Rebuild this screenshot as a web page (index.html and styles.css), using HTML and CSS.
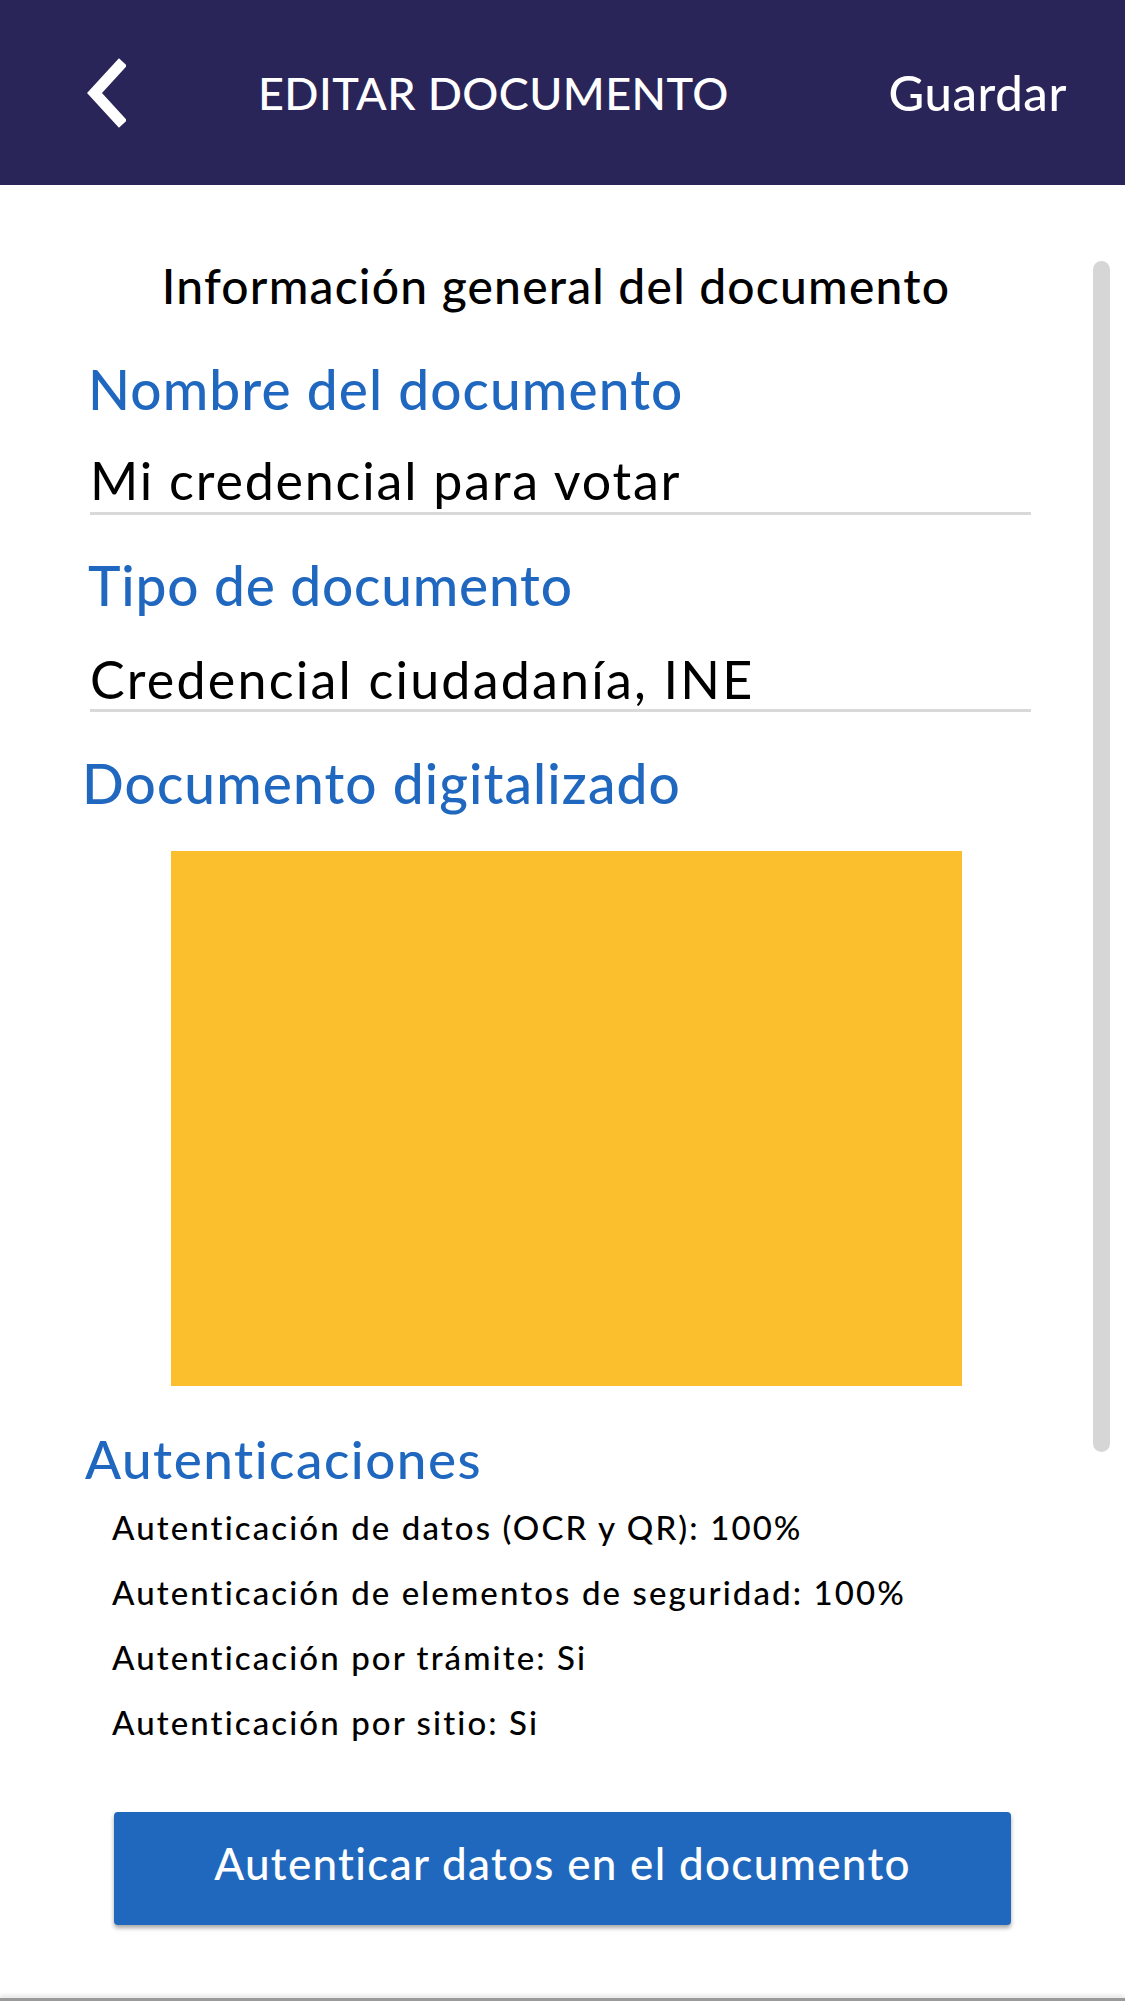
FILE: index.html
```html
<!DOCTYPE html>
<html lang="es">
<head>
<meta charset="utf-8">
<title>Editar documento</title>
<link rel="stylesheet" href="styles.css">
</head>
<body>
<div class="screen">
  <header class="topbar">
    <svg class="back" viewBox="0 0 40 70" width="40" height="70" aria-hidden="true">
      <polyline points="37,4 8.5,35 37,66" fill="none" stroke="#ffffff" stroke-width="11" stroke-linejoin="miter" stroke-miterlimit="10"/>
    </svg>
    <h1 class="topbar-title">EDITAR DOCUMENTO</h1>
    <span class="topbar-action">Guardar</span>
  </header>

  <main class="content">
    <div class="scrollbar"></div>
    <h2 class="section-title">Información general del documento</h2>

    <div class="fields">
      <div class="field-label">Nombre del documento</div>
      <div class="field-value">Mi credencial para votar</div>

      <div class="field-label field-label--gap">Tipo de documento</div>
      <div class="field-value field-value--second">Credencial ciudadanía, INE</div>

      <div class="field-label field-label--doc">Documento digitalizado</div>
    </div>

    <div class="doc-image"></div>

    <div class="field-label field-label--auth">Autenticaciones</div>
    <ul class="auth-list">
      <li>Autenticación de datos (OCR y QR): 100%</li>
      <li>Autenticación de elementos de seguridad: 100%</li>
      <li>Autenticación por trámite: Si</li>
      <li>Autenticación por sitio: Si</li>
    </ul>

    <button class="primary-btn" type="button">Autenticar datos en el documento</button>
  </main>

  <div class="bottom-edge"></div>
</div>
</body>
</html>
```

FILE: styles.css
```css
* {
  box-sizing: border-box;
}

html, body {
  margin: 0;
  padding: 0;
  background: #ffffff;
}

body {
  font-family: "Lato", "Open Sans", sans-serif;
  color: #000000;
}

.screen {
  width: 1125px;
  height: 2001px;
  display: flex;
  flex-direction: column;
  overflow: hidden;
}

/* ---------- top bar ---------- */
.topbar {
  height: 185px;
  flex: 0 0 185px;
  background: #2a2559;
  display: flex;
  align-items: center;
  padding-left: 86px;
  padding-right: 58px;
  color: #ffffff;
}

.back {
  display: block;
  flex: 0 0 40px;
  margin-top: 1px;
}

.topbar-title {
  margin: 0 0 0 132px;
  font-size: 45px;
  font-weight: 500;
  line-height: 1.2;
  letter-spacing: 0.4px;
}

.topbar-action {
  margin-left: auto;
  font-size: 49px;
  font-weight: 500;
  line-height: 1.2;
  letter-spacing: 0.6px;
}

/* ---------- content ---------- */
.content {
  position: relative;
  flex: 1 1 auto;
  padding-top: 72px;
}

.scrollbar {
  position: absolute;
  left: 1093px;
  top: 76px;
  width: 17px;
  height: 1191px;
  border-radius: 9px;
  background: #d6d6d6;
}

.section-title {
  width: 1112px;
  margin: 0;
  text-align: center;
  font-size: 48px;
  font-weight: 500;
  line-height: 1.2;
  letter-spacing: 1.2px;
}

.fields {
  margin-left: 88px;
  width: 943px;
}

.field-label {
  color: #1f67bf;
  font-size: 55px;
  font-weight: 500;
  line-height: 1.2;
  letter-spacing: 1.1px;
  margin-top: 41px;
}

.field-label--gap {
  margin-top: 37px;
  letter-spacing: 0.8px;
}

.field-label--doc {
  margin-top: 38px;
  margin-left: -6px;
}

.field-label--auth {
  font-size: 53px;
  letter-spacing: 1.5px;
  margin-top: 41px;
  margin-left: 85px;
}

.field-value {
  margin-top: 27px;
  margin-left: 2px;
  font-size: 52px;
  font-weight: 400;
  line-height: 1.2;
  letter-spacing: 1.8px;
  border-bottom: 3px solid #d9d9d9;
  padding-bottom: 1px;
}

.field-value--second {
  margin-top: 31px;
  line-height: 60px;
  padding-bottom: 0;
  letter-spacing: 2.2px;
}

.doc-image {
  margin-top: 35px;
  margin-left: 171px;
  width: 791px;
  height: 535px;
  background: #fbbf2e;
}

.auth-list {
  list-style: none;
  margin: 4px 0 0 0;
  padding: 0 0 0 112px;
}

.auth-list li {
  font-size: 33px;
  font-weight: 500;
  line-height: 65px;
  letter-spacing: 2.1px;
}

.primary-btn {
  display: block;
  margin: 57px 0 0 114px;
  width: 897px;
  height: 113px;
  border: 0;
  border-radius: 4px;
  background: #1f68bd;
  color: #ffffff;
  font-family: "Lato", "Open Sans", sans-serif;
  font-size: 44px;
  font-weight: 500;
  letter-spacing: 1.3px;
  padding: 0 0 10px 0;
  box-shadow: 0 3px 4px rgba(0, 0, 0, 0.35);
}

.bottom-edge {
  flex: 0 0 3px;
  background: #9a9a9a;
  box-shadow: 0 -2px 4px rgba(0, 0, 0, 0.15);
}
```
